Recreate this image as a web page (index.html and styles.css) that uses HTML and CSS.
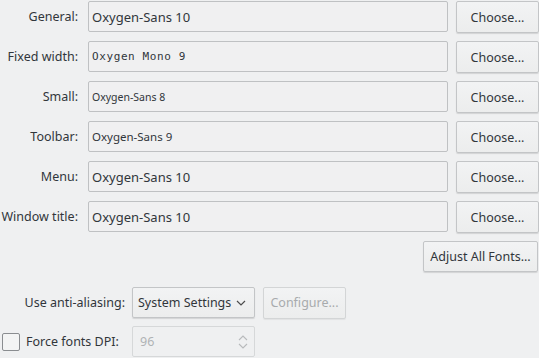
FILE: index.html
```html
<!DOCTYPE html>
<html lang="en">
<head>
    <meta charset="UTF-8">
    <title>Fonts</title>
    <link rel="stylesheet" href="styles.css">
</head>
<body>
    <div class="font-grid">
        <label class="row-label">General:</label>
        <div class="font-field">Oxygen-Sans 10</div>
        <button class="btn">Choose...</button>

        <label class="row-label">Fixed width:</label>
        <div class="font-field mono">Oxygen Mono 9</div>
        <button class="btn">Choose...</button>

        <label class="row-label">Small:</label>
        <div class="font-field small">Oxygen-Sans 8</div>
        <button class="btn">Choose...</button>

        <label class="row-label">Toolbar:</label>
        <div class="font-field medium">Oxygen-Sans 9</div>
        <button class="btn">Choose...</button>

        <label class="row-label">Menu:</label>
        <div class="font-field">Oxygen-Sans 10</div>
        <button class="btn">Choose...</button>

        <label class="row-label">Window title:</label>
        <div class="font-field">Oxygen-Sans 10</div>
        <button class="btn">Choose...</button>
    </div>

    <div class="adjust-row">
        <button class="btn adjust-btn">Adjust All Fonts...</button>
    </div>

    <div class="options">
        <label class="opt-label">Use anti-aliasing:</label>
        <div class="opt-controls">
            <div class="combo">
                <span>System Settings</span>
                <svg width="12" height="8" viewBox="0 0 12 8"><path d="M2 2 L6 6 L10 2" fill="none" stroke="#4d4d4d" stroke-width="1.2"/></svg>
            </div>
            <button class="btn configure-btn" disabled>Configure...</button>
        </div>

        <label class="opt-label check-label"><span class="checkbox"></span>Force fonts DPI:</label>
        <div class="opt-controls">
            <div class="spinbox">
                <span>96</span>
                <svg width="12" height="20" viewBox="0 0 12 20"><path d="M2 8 L6 4 L10 8 M2 12 L6 16 L10 12" fill="none" stroke="#b8babc" stroke-width="1.1"/></svg>
            </div>
        </div>
    </div>
</body>
</html>
```

FILE: styles.css
```css
body {
    font-family: 'Noto Sans', sans-serif;
    font-size: 12.5px;
    background-color: #eff0f1;
    color: #31363b;
    margin: 0;
    padding: 0;
}
.font-grid {
    display: grid;
    grid-template-columns: 80px 360px 83px;
    grid-auto-rows: 32px;
    column-gap: 8px;
    row-gap: 8px;
    padding-top: 1px;
}
.row-label {
    text-align: right;
    padding-right: 2px;
    align-self: center;
    white-space: nowrap;
    margin-top: -1px;
}
.font-field {
    height: 31px;
    box-sizing: border-box;
    border: 1px solid #bfc1c3;
    border-radius: 2px;
    background-color: #f0f0f1;
    display: flex;
    align-items: center;
    padding-left: 3px;
    font-size: 13px;
}
.font-field.mono {
    font-family: 'DejaVu Sans Mono', monospace;
    font-size: 11px;
    letter-spacing: 0.6px;
}
.font-field.small {
    font-size: 10.5px;
}
.font-field.medium {
    font-size: 11.5px;
}
.btn {
    font-family: inherit;
    font-size: 12.5px;
    color: #31363b;
    background: linear-gradient(#f2f3f4, #eceded);
    border: 1px solid #c3c5c7;
    border-radius: 2px;
    box-shadow: 0 1px 1px rgba(0, 0, 0, 0.12);
    height: 32px;
    padding: 0 8px;
    cursor: pointer;
}
.btn:disabled {
    color: #a8abad;
    border-color: #d3d5d6;
    box-shadow: 0 1px 1px rgba(0, 0, 0, 0.06);
}
.adjust-row {
    display: flex;
    justify-content: flex-end;
    margin-top: 8px;
    padding-right: 1px;
}
.adjust-btn {
    width: 115px;
    height: 31px;
    padding: 0;
}
.options {
    display: grid;
    grid-template-columns: 132px auto;
    grid-auto-rows: 31px;
    row-gap: 8px;
    margin-top: 15px;
}
.opt-label {
    text-align: right;
    padding-right: 7px;
    align-self: center;
    white-space: nowrap;
}
.check-label {
    display: flex;
    align-items: center;
    justify-content: flex-start;
    padding-left: 2px;
}
.checkbox {
    display: inline-block;
    width: 16px;
    height: 16px;
    border: 1px solid #8a8d90;
    border-radius: 2px;
    margin-right: 6px;
    background-color: #f3f4f4;
}
.opt-controls {
    display: flex;
    gap: 8px;
    align-items: center;
}
.combo {
    width: 123px;
    height: 31px;
    box-sizing: border-box;
    border: 1px solid #c3c5c7;
    border-radius: 2px;
    background: linear-gradient(#f2f3f4, #eceded);
    box-shadow: 0 1px 1px rgba(0, 0, 0, 0.12);
    display: flex;
    align-items: center;
    justify-content: space-between;
    padding: 0 7px 0 5px;
}
.configure-btn {
    width: 83px;
    padding: 0;
}
.spinbox {
    width: 123px;
    height: 31px;
    box-sizing: border-box;
    border: 1px solid #d6d8d9;
    border-radius: 2px;
    background-color: #eff0f1;
    color: #b0b3b5;
    display: flex;
    align-items: center;
    justify-content: space-between;
    padding: 0 5px 0 7px;
}
```
